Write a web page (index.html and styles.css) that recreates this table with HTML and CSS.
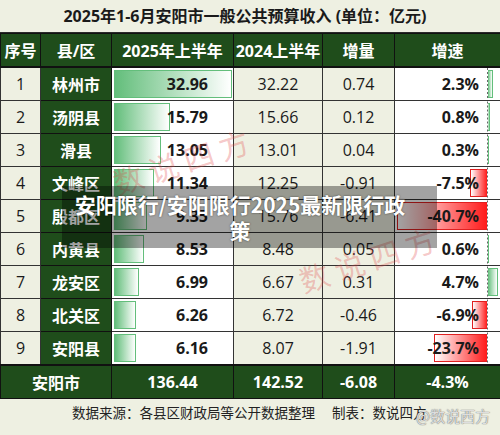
FILE: index.html
```html
<!DOCTYPE html>
<html lang="zh-CN">
<head>
    <meta charset="UTF-8">
    <meta name="viewport" content="width=device-width, initial-scale=1.0">
    <title>安阳市一般公共预算收入</title>
    <link rel="stylesheet" href="styles.css">
</head>
<body>
    <div class="sheet">
        <div class="title">2025年1-6月安阳市一般公共预算收入 (单位：亿元)</div>
        <table class="budget">
            <colgroup>
                <col class="c-no">
                <col class="c-area">
                <col class="c-2025">
                <col class="c-2024">
                <col class="c-inc">
                <col class="c-rate">
            </colgroup>
            <thead>
                <tr>
                    <th>序号</th>
                    <th>县/区</th>
                    <th>2025年上半年</th>
                    <th>2024上半年</th>
                    <th>增量</th>
                    <th>增速</th>
                </tr>
            </thead>
            <tbody>
                <tr>
                    <td class="no">1</td>
                    <td class="area">林州市</td>
                    <td class="now"><div class="bar" style="width: 118px;"></div><span>32.96</span></td>
                    <td class="plain">32.22</td>
                    <td class="plain">0.74</td>
                    <td class="rate"><div class="up" style="width: 5px;"></div><span>2.3%</span></td>
                </tr>
                <tr>
                    <td class="no">2</td>
                    <td class="area">汤阴县</td>
                    <td class="now"><div class="bar" style="width: 56px;"></div><span>15.79</span></td>
                    <td class="plain">15.66</td>
                    <td class="plain">0.12</td>
                    <td class="rate"><div class="up" style="width: 2px;"></div><span>0.8%</span></td>
                </tr>
                <tr>
                    <td class="no">3</td>
                    <td class="area">滑县</td>
                    <td class="now"><div class="bar" style="width: 47px;"></div><span>13.05</span></td>
                    <td class="plain">13.01</td>
                    <td class="plain">0.04</td>
                    <td class="rate"><div class="up" style="width: 1px;"></div><span>0.3%</span></td>
                </tr>
                <tr>
                    <td class="no">4</td>
                    <td class="area">文峰区</td>
                    <td class="now"><div class="bar" style="width: 40px;"></div><span>11.34</span></td>
                    <td class="plain">12.25</td>
                    <td class="plain">-0.91</td>
                    <td class="rate"><div class="down" style="width: 17px;"></div><span>-7.5%</span></td>
                </tr>
                <tr>
                    <td class="no">5</td>
                    <td class="area">殷都区</td>
                    <td class="now"><div class="bar" style="width: 33px;"></div><span>9.35</span></td>
                    <td class="plain">15.76</td>
                    <td class="plain">-6.41</td>
                    <td class="rate"><div class="down" style="width: 90px;"></div><span>-40.7%</span></td>
                </tr>
                <tr>
                    <td class="no">6</td>
                    <td class="area">内黄县</td>
                    <td class="now"><div class="bar" style="width: 30px;"></div><span>8.53</span></td>
                    <td class="plain">8.48</td>
                    <td class="plain">0.05</td>
                    <td class="rate"><div class="up" style="width: 1px;"></div><span>0.6%</span></td>
                </tr>
                <tr>
                    <td class="no">7</td>
                    <td class="area">龙安区</td>
                    <td class="now"><div class="bar" style="width: 25px;"></div><span>6.99</span></td>
                    <td class="plain">6.67</td>
                    <td class="plain">0.31</td>
                    <td class="rate"><div class="up" style="width: 10px;"></div><span>4.7%</span></td>
                </tr>
                <tr>
                    <td class="no">8</td>
                    <td class="area">北关区</td>
                    <td class="now"><div class="bar" style="width: 22px;"></div><span>6.26</span></td>
                    <td class="plain">6.72</td>
                    <td class="plain">-0.46</td>
                    <td class="rate"><div class="down" style="width: 15px;"></div><span>-6.9%</span></td>
                </tr>
                <tr>
                    <td class="no">9</td>
                    <td class="area">安阳县</td>
                    <td class="now"><div class="bar" style="width: 22px;"></div><span>6.16</span></td>
                    <td class="plain">8.07</td>
                    <td class="plain">-1.91</td>
                    <td class="rate"><div class="down" style="width: 53px;"></div><span>-23.7%</span></td>
                </tr>
            </tbody>
            <tfoot>
                <tr>
                    <td colspan="2">安阳市</td>
                    <td>136.44</td>
                    <td>142.52</td>
                    <td>-6.08</td>
                    <td>-4.3%</td>
                </tr>
            </tfoot>
        </table>
        <div class="source">
            <span>数据来源：各县区财政局等公开数据整理</span>
            <span>制表：数说四方</span>
        </div>

        <!-- watermarks -->
        <div class="stamp stamp-a">数说四方</div>
        <div class="stamp stamp-b">数说四方</div>
        <div class="handle">@数说西方</div>

        <!-- caption over the picture -->
        <div class="caption">安阳限行/安阳限行2025最新限行政<br>策</div>
    </div>
</body>
</html>
```

FILE: styles.css
```css
body {
    margin: 0;
    padding: 0;
    font-family: "Open Sans", "Noto Sans CJK SC", sans-serif;
    color: #1a1a1a;
    background-color: #eef0e2;
}

.sheet {
    position: relative;
    width: 500px;
    height: 435px;
    overflow: hidden;
    background-color: #eef0e2;
}

.title {
    height: 33px;
    line-height: 33px;
    padding-right: 10px;
    text-align: center;
    font-size: 16px;
    font-weight: bold;
    border-bottom: 1px solid #2a2a2a;
    box-sizing: border-box;
}

.budget {
    width: 500px;
    table-layout: fixed;
    border-collapse: collapse;
}

.c-no { width: 40px; }
.c-area { width: 71px; }
.c-2025 { width: 122px; }
.c-2024 { width: 89px; }
.c-inc { width: 72px; }
.c-rate { width: 106px; }

.budget th,
.budget td {
    padding: 0;
    border: 1px solid #333;
    text-align: center;
    white-space: nowrap;
}

.budget thead th {
    height: 32px;
    background-color: #1f4d1b;
    color: #fff;
    font-size: 16px;
    font-weight: bold;
    border-color: #111;
}

.budget tbody td {
    height: 32px;
    font-size: 16px;
}

.budget tbody tr:first-child td {
    border-top: 2px solid #111;
}

.no,
.plain {
    background-color: #eef0e2;
}

.area {
    background-color: #1f4d1b;
    color: #fff;
    font-weight: bold;
    border-color: #111 !important;
}

.now {
    position: relative;
    background-color: #fff;
    text-align: right !important;
    font-weight: bold;
}

.now span {
    position: relative;
    padding-right: 25px;
}

.bar {
    position: absolute;
    left: 2px;
    top: 2px;
    bottom: 2px;
    border: 1px solid #63be7b;
    box-sizing: border-box;
    background: linear-gradient(to right, #63be7b, #ffffff);
}

.rate {
    position: relative;
    background-color: #fff;
    text-align: right !important;
    font-weight: bold;
    background-image: linear-gradient(to bottom, #666 50%, transparent 50%);
    background-size: 1px 4px;
    background-repeat: repeat-y;
    background-position: 92px 0;
}

.rate span {
    position: relative;
    padding-right: 21px;
}

.up,
.down {
    position: absolute;
    top: 2px;
    bottom: 2px;
    box-sizing: border-box;
}

.up {
    left: 93px;
    border: 1px solid #63be7b;
    border-left: none;
    background: linear-gradient(to right, #63be7b, #ffffff);
}

.down {
    right: 13px;
    border: 1px solid #e02020;
    border-right: none;
    background: linear-gradient(to right, #ffffff, #ff1a1a);
}

.budget tfoot td {
    height: 32px;
    background-color: #1f4d1b;
    color: #fff;
    font-size: 16px;
    font-weight: bold;
    border-color: #111;
    border-top: 2px solid #111;
}

.source {
    display: flex;
    gap: 17px;
    padding: 3px 0 0 72px;
    font-size: 13.5px;
    color: #222;
}

.stamp {
    position: absolute;
    font-family: "Noto Sans CJK SC", sans-serif;
    font-size: 30px;
    letter-spacing: 7px;
    color: rgba(225, 70, 70, 0.3);
    white-space: nowrap;
    transform: rotate(-18deg);
}

.stamp-a {
    left: 110px;
    top: 138px;
}

.stamp-b {
    left: 296px;
    top: 236px;
}

.handle {
    position: absolute;
    left: 416px;
    top: 405px;
    font-family: "Noto Sans CJK SC", sans-serif;
    font-size: 15px;
    color: rgba(255, 255, 255, 0.75);
    text-shadow: 0 0 1px #777, 0 0 1px #777;
}

.caption {
    position: absolute;
    left: 62px;
    top: 186px;
    width: 375px;
    height: 62px;
    box-sizing: border-box;
    padding: 5px 19px 0 0;
    background-color: rgba(0, 0, 0, 0.36);
    color: #fff;
    font-family: "Noto Sans CJK SC", sans-serif;
    font-size: 21px;
    font-weight: bold;
    line-height: 26px;
    text-align: center;
    text-shadow: 0 0 2px rgba(0, 0, 0, 0.6);
}
```
